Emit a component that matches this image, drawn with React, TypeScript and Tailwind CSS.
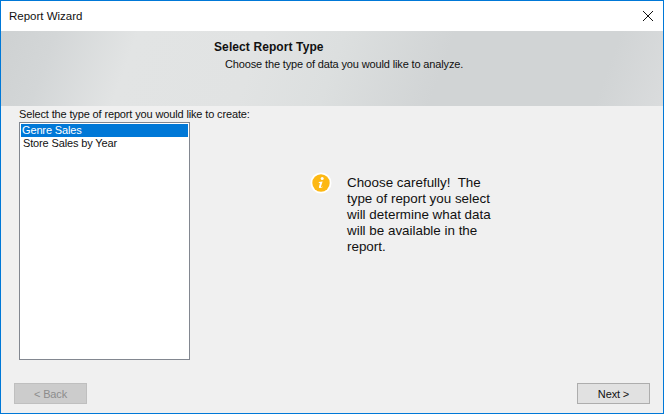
export default function App() {
  return (
    <div className="w-[664px] h-[414px] flex flex-col overflow-hidden border border-[#0078d7] bg-[#f0f0f0] text-[11px] leading-[14px] tracking-[-0.14px] text-black font-['Liberation_Sans',Arial,sans-serif]">
      <div className="h-[30px] shrink-0 bg-white flex items-center justify-between pl-[8px] pr-[10px]">
        <span className="text-[11.5px] tracking-normal text-[#111]">Report Wizard</span>
        <svg width="12" height="12" viewBox="0 0 12 12" className="mr-[-1px] mt-[-1px]">
          <path d="M1 1 L11 11 M11 1 L1 11" stroke="#111" strokeWidth="1" fill="none" />
        </svg>
      </div>
      <div className="h-[75px] shrink-0 bg-[linear-gradient(110deg,#ced1d2_0%,#d3d6d7_8%,#e2e4e4_20%,#e1e3e3_38%,#dcdfdf_50%,#d1d4d5_66%,#d1d4d5_90%,#dadcdd_100%)] pl-[213px] pt-[9px]">
        <div className="font-bold text-[12px] tracking-[0.1px] text-[#111]">Select Report Type</div>
        <div className="mt-[3px] pl-[11px] text-[#111]">Choose the type of data you would like to analyze.</div>
      </div>
      <div className="flex-1 flex flex-col pl-[18px] pr-[13px]">
        <div className="pt-[1px] text-[#111]">Select the type of report you would like to create:</div>
        <div className="flex mt-[1px]">
          <div className="w-[171px] h-[238px] shrink-0 border border-[#828790] bg-white p-[1px] text-[#111]">
            <div className="h-[13px] leading-[13px] bg-[#0078d7] text-white pl-[1px] mt-[0px]">Genre Sales</div>
            <div className="h-[13px] leading-[13px] pl-[2px]">Store Sales by Year</div>
          </div>
          <div className="flex ml-[120px] pt-[47px]">
            <svg width="22" height="22" viewBox="0 0 22 22" className="shrink-0 mt-[3px]">
              <circle cx="11" cy="11" r="10.5" fill="#ffffff" />
              <circle cx="11" cy="11" r="8.7" fill="#fdb813" />
              <circle cx="12.2" cy="6.6" r="1.5" fill="#ffffff" />
              <path d="M8.8 10 L12.6 9.4 L11 14.6 Q10.8 15.4 12.6 14.4 L12.8 15 Q10.6 16.4 9.4 16 Q8.6 15.6 9 14.4 L10 11 L8.8 11 Z" fill="#ffffff" />
            </svg>
            <div className="w-[160px] ml-[15px] text-[13.4px] leading-[16px] tracking-normal text-[#111] whitespace-pre-wrap pt-[6px]">
              {"Choose carefully!  The type of report you select will determine what data will be available in the report."}
            </div>
          </div>
        </div>
        <div className="flex justify-between mt-[23px] ml-[-5px]">
          <div className="w-[73px] h-[21px] border border-[#bfbfbf] bg-[#cccccc] flex items-center justify-center text-[#8c8c8c]">&lt; Back</div>
          <div className="w-[73px] h-[21px] border border-[#adadad] bg-[#e1e1e1] flex items-center justify-center text-[#111]">Next &gt;</div>
        </div>
      </div>
    </div>
  );
}
